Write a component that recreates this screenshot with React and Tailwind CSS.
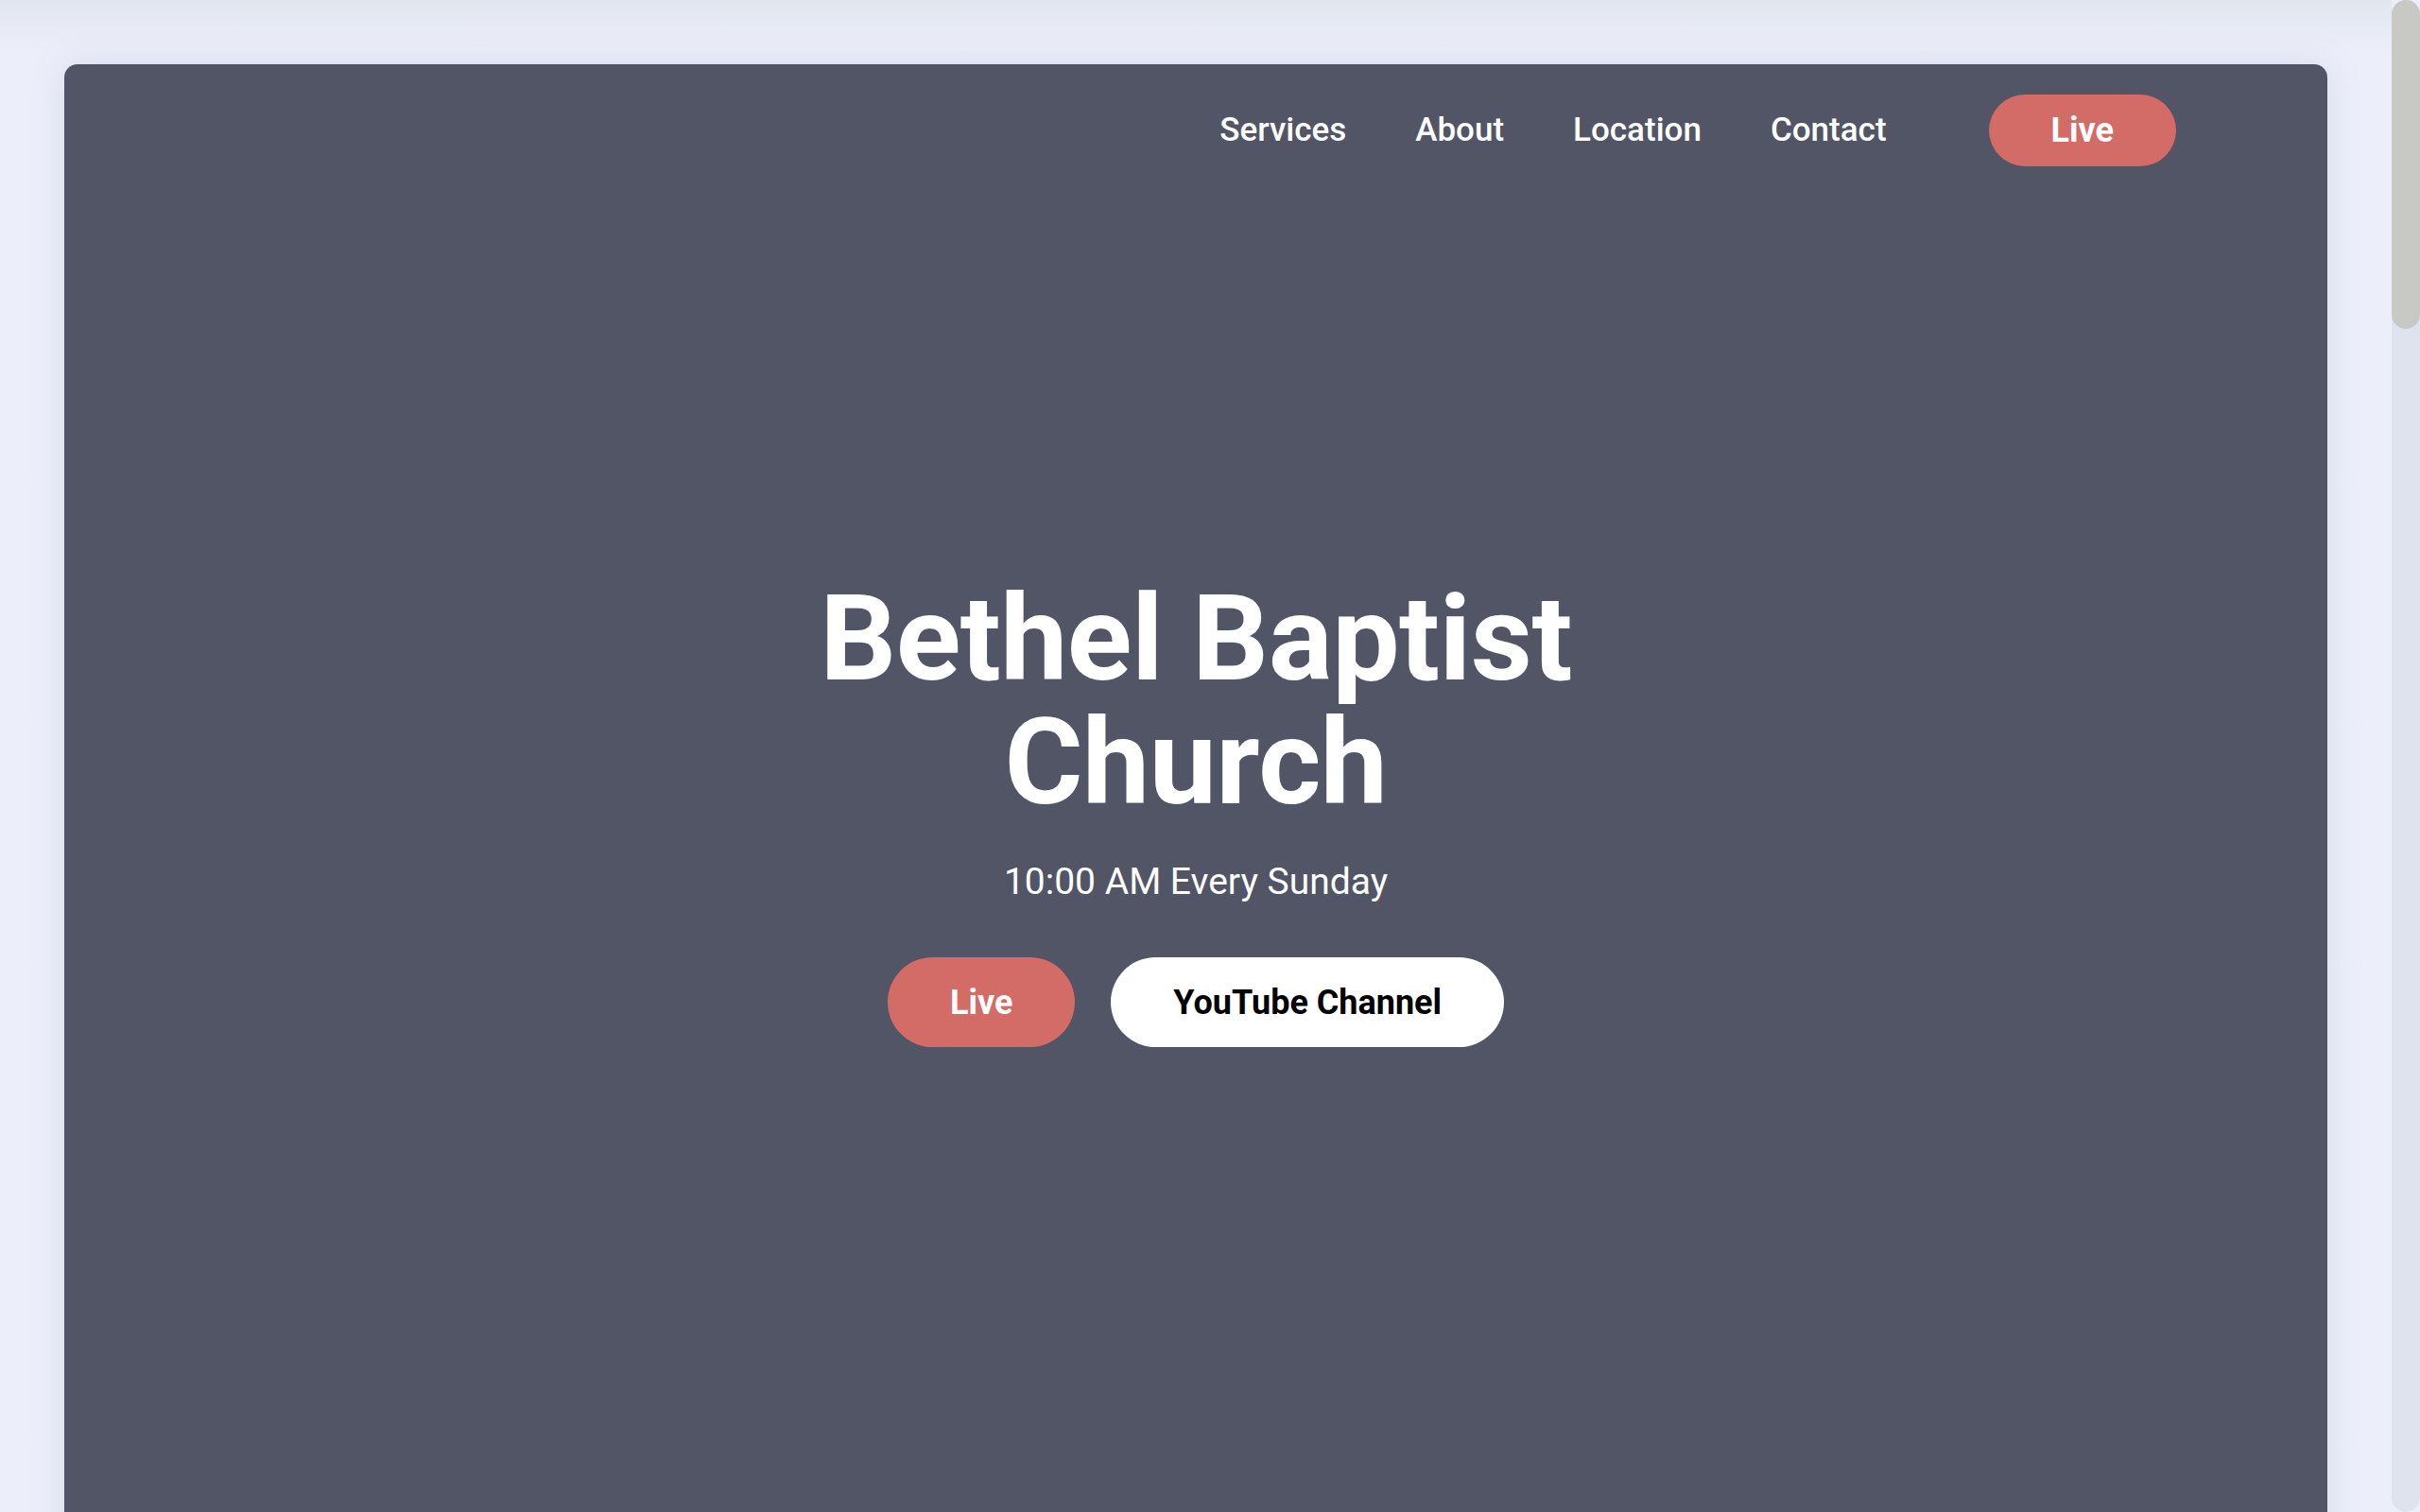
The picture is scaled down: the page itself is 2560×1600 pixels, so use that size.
import React from 'react';

const navLinks = ['Services', 'About', 'Location', 'Contact'];

const font = { fontFamily: '"Roboto", "Noto Sans", sans-serif' };

export default function App() {
  return (
    <div className="flex h-screen overflow-hidden bg-[#eceffa]" style={font}>
      <div className="flex-1 bg-gradient-to-b from-[#e2e6ef] via-[#eceffa] via-[3.5%] to-[#eceffa] px-[68px] pt-[68px]">
        <div className="h-[1700px] rounded-t-[14px] bg-[#525566] shadow-[0_0_36px_rgba(120,130,170,0.18)]">
          {/* top nav */}
          <nav className="flex items-center justify-end pt-[32px] pr-[160px]">
            <ul className="flex items-center gap-[73px]">
              {navLinks.map((link) => (
                <li key={link}>
                  <a href="#" className="text-[35px] font-medium leading-none text-white">
                    {link}
                  </a>
                </li>
              ))}
            </ul>
            <a
              href="#"
              className="ml-[108px] flex h-[76px] items-center rounded-full bg-[#d36b67] px-[66px] text-[36px] font-bold text-white"
            >
              Live
            </a>
          </nav>

          {/* hero */}
          <section className="flex flex-col items-center pt-[434px] text-center text-white">
            <h1 className="text-[127px] font-bold leading-[131px] tracking-[-0.5px]">
              Bethel Baptist
              <br />
              Church
            </h1>
            <p className="mt-[42px] text-[39px] leading-none">10:00 AM Every Sunday</p>
            <div className="mt-[60px] flex gap-[38px]">
              <a
                href="#"
                className="flex h-[95px] items-center rounded-full bg-[#d36b67] px-[66px] text-[36px] font-bold text-white"
              >
                Live
              </a>
              <a
                href="#"
                className="flex h-[95px] items-center rounded-full bg-white px-[66px] text-[36px] font-bold text-black"
              >
                YouTube Channel
              </a>
            </div>
          </section>
        </div>
      </div>

      {/* scrollbar */}
      <div className="flex w-[30px] flex-col rounded-full bg-[#dfe3ee]">
        <div className="h-[348px] rounded-full bg-[#c8c9c5]" />
      </div>
    </div>
  );
}
